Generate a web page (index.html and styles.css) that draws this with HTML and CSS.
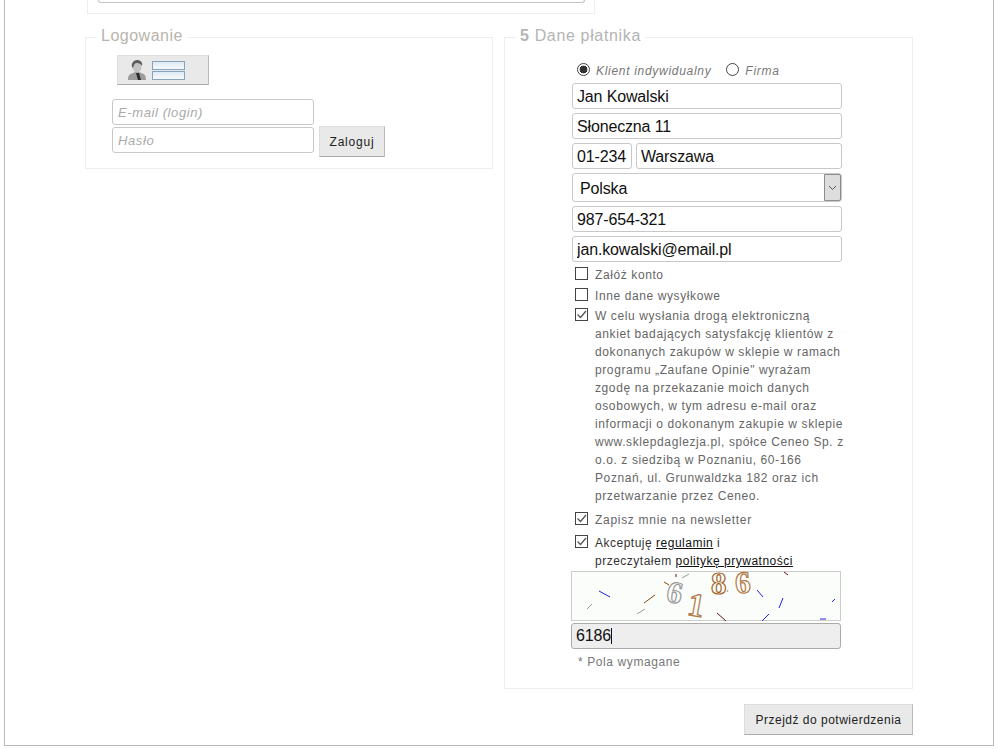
FILE: index.html
```html
<!DOCTYPE html>
<html lang="pl">
<head>
<meta charset="utf-8">
<title>Dane płatnika</title>
<link rel="stylesheet" href="styles.css">
</head>
<body>
<div class="frame">
  <div class="prev-box"><div class="prev-input"></div></div>
  <div class="columns">
    <fieldset class="panel login">
      <legend>Logowanie</legend>
      <div class="login-body">
        <div class="login-tab">
          <svg class="person" width="18" height="20" viewBox="0 0 18 20">
            <path d="M0 20c0-4 1-6 5-7l2-1h4l2 1c4 1 5 3 5 7z" fill="#9c9c9c"/>
            <ellipse cx="9" cy="7" rx="4.500" ry="5.500" fill="#c4c4c4"/>
            <path d="M4 7c-1-4 2-7 5-7s6 2 5 6c-1-2-3-3-5-3S6 4 5 8z" fill="#5c5c5c"/>
            <path d="M8 13h3l2 7h-3z" fill="#2a2a2a"/>
          </svg>
          <div class="mini-form"><span></span><span></span></div>
        </div>
        <div class="login-fields">
          <input class="field login-input" type="text" placeholder="E-mail (login)">
          <div class="login-row">
            <input class="field login-input" type="password" placeholder="Hasło">
            <button class="btn btn-login" type="button">Zaloguj</button>
          </div>
        </div>
      </div>
    </fieldset>

    <div class="right-col">
      <fieldset class="panel payer">
        <legend><b>5</b> Dane płatnika</legend>
        <div class="payer-body">
          <div class="radios">
            <label class="radio"><span class="dot on"></span>Klient indywidualny</label>
            <label class="radio"><span class="dot"></span>Firma</label>
          </div>
          <div class="form">
            <input class="field" type="text" value="Jan Kowalski">
            <input class="field" type="text" value="Słoneczna 11">
            <div class="zip-row">
              <input class="field zip" type="text" value="01-234">
              <input class="field city" type="text" value="Warszawa">
            </div>
            <div class="select-wrap">
              <select class="field select"><option>Polska</option></select>
              <span class="select-arrow">
                <svg width="9" height="6" viewBox="0 0 9 6"><path d="M1 1l3.500 3.500L8 1" fill="none" stroke="#555" stroke-width="1"/></svg>
              </span>
            </div>
            <input class="field" type="text" value="987-654-321">
            <input class="field" type="text" value="jan.kowalski@email.pl">
          </div>
          <div class="checks">
            <label class="check check-short"><span class="box"></span><span>Załóż konto</span></label>
            <label class="check check-short"><span class="box"></span><span>Inne dane wysyłkowe</span></label>
            <label class="check check-long">
              <span class="box"><svg width="11" height="11" viewBox="0 0 11 11"><path d="M1.500 5.500l3 3L10 2" fill="none" stroke="#555" stroke-width="1.300"/></svg></span>
              <span>W celu wysłania drogą elektroniczną<br>ankiet badających satysfakcję klientów z<br>dokonanych zakupów w sklepie w ramach<br>programu „Zaufane Opinie" wyrażam<br>zgodę na przekazanie moich danych<br>osobowych, w tym adresu e-mail oraz<br>informacji o dokonanym zakupie w sklepie<br>www.sklepdaglezja.pl, spółce Ceneo Sp. z<br>o.o. z siedzibą w Poznaniu, 60-166<br>Poznań, ul. Grunwaldzka 182 oraz ich<br>przetwarzanie przez Ceneo.</span>
            </label>
            <label class="check check-news">
              <span class="box"><svg width="11" height="11" viewBox="0 0 11 11"><path d="M1.500 5.500l3 3L10 2" fill="none" stroke="#555" stroke-width="1.300"/></svg></span>
              <span>Zapisz mnie na newsletter</span>
            </label>
            <label class="check check-terms">
              <span class="box"><svg width="11" height="11" viewBox="0 0 11 11"><path d="M1.500 5.500l3 3L10 2" fill="none" stroke="#555" stroke-width="1.300"/></svg></span>
              <span>Akceptuję <a href="#">regulamin</a> i<br>przeczytałem <a href="#">politykę prywatności</a></span>
            </label>
          </div>
          <div class="captcha">
            <svg width="268" height="48" viewBox="572 572 268 48">
              <g fill="none" stroke-width="1">
                <g stroke="#2222dd">
                  <path d="M599 591l11 6M757 590l6 7M783 598l-4 10M835 599l-3 3M769 614l-7 7M820 619h6"/>
                </g>
                <g stroke="#999">
                  <path d="M587 609l5-5M637 614l8-5M682 578l7-4M727 592l1-2"/>
                </g>
                <g stroke="#8a4a12">
                  <path d="M644 603l11-8M664 582l5 3"/>
                </g>
                <g stroke="#661111">
                  <path d="M676 574v3M784 572l4 3M717 613l9 8"/>
                </g>
              </g>
              <g class="cap-digits">
                <text class="cap-gray" x="667" y="603" transform="rotate(12 675 593)">6</text>
                <text class="cap-tan cap-one" x="688" y="616" transform="rotate(10 696 605)">1</text>
                <text class="cap-brown" x="711" y="594">8</text>
                <text class="cap-tan" x="735" y="593" transform="rotate(-4 743 584)">6</text>
              </g>
            </svg>
          </div>
          <div class="captcha-input">
            <input class="field answer" type="text" value="6186">
            <span class="caret"></span>
          </div>
          <p class="required">* Pola wymagane</p>
        </div>
      </fieldset>
      <div class="actions">
        <button class="btn btn-next" type="button">Przejdź do potwierdzenia</button>
      </div>
    </div>
  </div>
</div>
</body>
</html>
```
FILE: styles.css
```css
* { box-sizing: border-box; }
html, body { margin: 0; padding: 0; background: #fff; }
body {
  font-family: "Liberation Sans", Arial, sans-serif;
  font-size: 12px;
  color: #666;
  height: 749px;
  overflow: hidden;
}
.frame {
  width: 990px;
  height: 746px;
  margin-left: 4px;
  border: 1px solid #bbb;
  border-top: 0;
  padding-left: 80px;
}
.prev-box {
  width: 508px;
  height: 14px;
  margin-left: 2px;
  border: 1px solid #eee;
  border-top: 0;
  padding-left: 10px;
}
.prev-input {
  height: 3px;
  width: 487px;
  border: 1px solid #c4c4c4;
  border-top: 0;
  border-radius: 0 0 3px 3px;
}
.columns {
  display: flex;
  align-items: flex-start;
  gap: 11px;
  margin-top: 13px;
}
.panel {
  margin: 0;
  min-width: 0;
  border: 1px solid #eee;
  padding: 0;
}
.panel legend {
  margin-left: 11px;
  padding: 0 4px 2px;
  font-size: 16px;
  line-height: 18px;
  letter-spacing: 0.5px;
  color: #b9b4ab;
}
.payer legend { color: #b4b4b4; letter-spacing: 0.65px; }
.login {
  width: 408px;
  height: 142px;
}
.login-body { padding: 8px 0 0 26px; }
.login-tab {
  width: 92px;
  height: 30px;
  margin-left: 5px;
  display: flex;
  align-items: center;
  gap: 6px;
  padding-left: 10px;
  background: #e9e9e9;
  border: 1px solid #ddd;
  border-bottom-color: #aaa;
  border-right-color: #bbb;
}
.mini-form {
  width: 33px;
  display: flex;
  flex-direction: column;
  gap: 1px;
}
.mini-form span {
  display: block;
  height: 9px;
  border: 1px solid #87a3ba;
  background: linear-gradient(#dfeaf5, #f6f9fc);
}
.login-fields {
  margin-top: 14px;
  display: flex;
  flex-direction: column;
  gap: 2px;
}
.login-row {
  display: flex;
  align-items: flex-start;
  gap: 5px;
}
.field {
  display: block;
  width: 100%;
  height: 26px;
  padding: 2px 4px 0;
  font-family: "Liberation Sans", Arial, sans-serif;
  font-size: 16px;
  letter-spacing: -0.15px;
  color: #111;
  background: #fff;
  border: 1px solid #c8c8c8;
  border-radius: 3px;
  outline: none;
}
.login-input {
  width: 202px;
  padding: 0 4px 0 5px;
  font-size: 13px;
  letter-spacing: 0.6px;
}
.login-input::placeholder { color: #aaa; font-style: italic; opacity: 1; }
.btn {
  font-family: "Liberation Sans", Arial, sans-serif;
  font-size: 12px;
  letter-spacing: 0.8px;
  color: #222;
  background: #e9e9e9;
  border: 1px solid #ddd;
  border-bottom-color: #aaa;
  border-right-color: #bbb;
  padding: 0;
}
.btn-login { width: 66px; height: 31px; margin-top: -1px; }
.right-col { width: 409px; }
.payer { height: 662px; }
.payer-body { padding: 13px 0 0 67px; }
.radios {
  display: flex;
  gap: 15px;
  padding-left: 5px;
  height: 21px;
  align-items: center;
}
.radio {
  display: flex;
  align-items: center;
  gap: 6px;
  font-style: italic;
  letter-spacing: 0.7px;
  color: #777;
}
.dot {
  width: 13px;
  height: 13px;
  border: 1px solid #444;
  border-radius: 50%;
  display: block;
  margin-top: -3px;
}
.dot.on { background: radial-gradient(circle, #333 0 3.600px, #fff 4.200px); }
.form {
  width: 270px;
  margin-top: 2px;
  display: flex;
  flex-direction: column;
  gap: 4px;
}
.zip-row { display: flex; gap: 4px; }
.zip { width: 60px; flex: none; }
.city { flex: 1; }
.select-wrap { position: relative; height: 29px; }
.select {
  height: 29px;
  padding-left: 7px;
  appearance: none;
  -webkit-appearance: none;
  font-size: 16px;
}
.select-arrow {
  position: absolute;
  top: 1px;
  right: 1px;
  width: 17px;
  height: 27px;
  display: flex;
  align-items: center;
  justify-content: center;
  background: #ddd;
  border: 1px solid #8e8e8e;
  border-radius: 0 2px 2px 0;
}
.checks {
  margin-top: 4px;
  width: 280px;
  font-size: 12px;
  line-height: 18px;
  letter-spacing: 0.6px;
}
.check {
  display: flex;
  gap: 7px;
  padding-left: 3px;
  color: #666;
}
.check-short { height: 21px; align-items: flex-start; }
.check-long { margin-top: -1px; height: 198px; }
.check-news { margin-top: 6px; height: 22px; letter-spacing: 0.7px; }
.check-terms { margin-top: 1px; color: #333; letter-spacing: 0.5px; }
.check-terms a { color: #111; }
.box {
  flex: none;
  width: 13px;
  height: 13px;
  margin-top: 1px;
  border: 1px solid #444;
  display: flex;
  align-items: center;
  justify-content: center;
  background: #fff;
}
.captcha {
  width: 270px;
  height: 50px;
  margin-top: 1px;
  margin-left: -1px;
  border: 1px solid #ccc;
  background: #fbfdfb;
}
.captcha svg { display: block; overflow: visible; }
.cap-digits text {
  font-family: "Liberation Serif", serif;
  font-size: 31px;
  font-weight: 700;
  fill: #fbfdfb;
  stroke-width: 1.200;
}
.cap-digits .cap-one { font-size: 33px; }
.cap-gray { stroke: #999; }
.cap-tan { stroke: #b07a48; }
.cap-brown { stroke: #a4662c; }
.captcha-input {
  position: relative;
  width: 270px;
  margin-top: 2px;
  margin-left: -1px;
}
.answer { background: #eee; border-color: #aaa; padding-top: 0; }
.caret {
  position: absolute;
  left: 40px;
  top: 5px;
  width: 1px;
  height: 16px;
  background: #111;
}
.required {
  margin: 6px 0 0 6px;
  letter-spacing: 0.6px;
  line-height: 15px;
  color: #777;
}
.actions {
  display: flex;
  justify-content: flex-end;
  margin-top: 15px;
}
.btn-next { width: 169px; height: 31px; letter-spacing: 0.5px; }
```
